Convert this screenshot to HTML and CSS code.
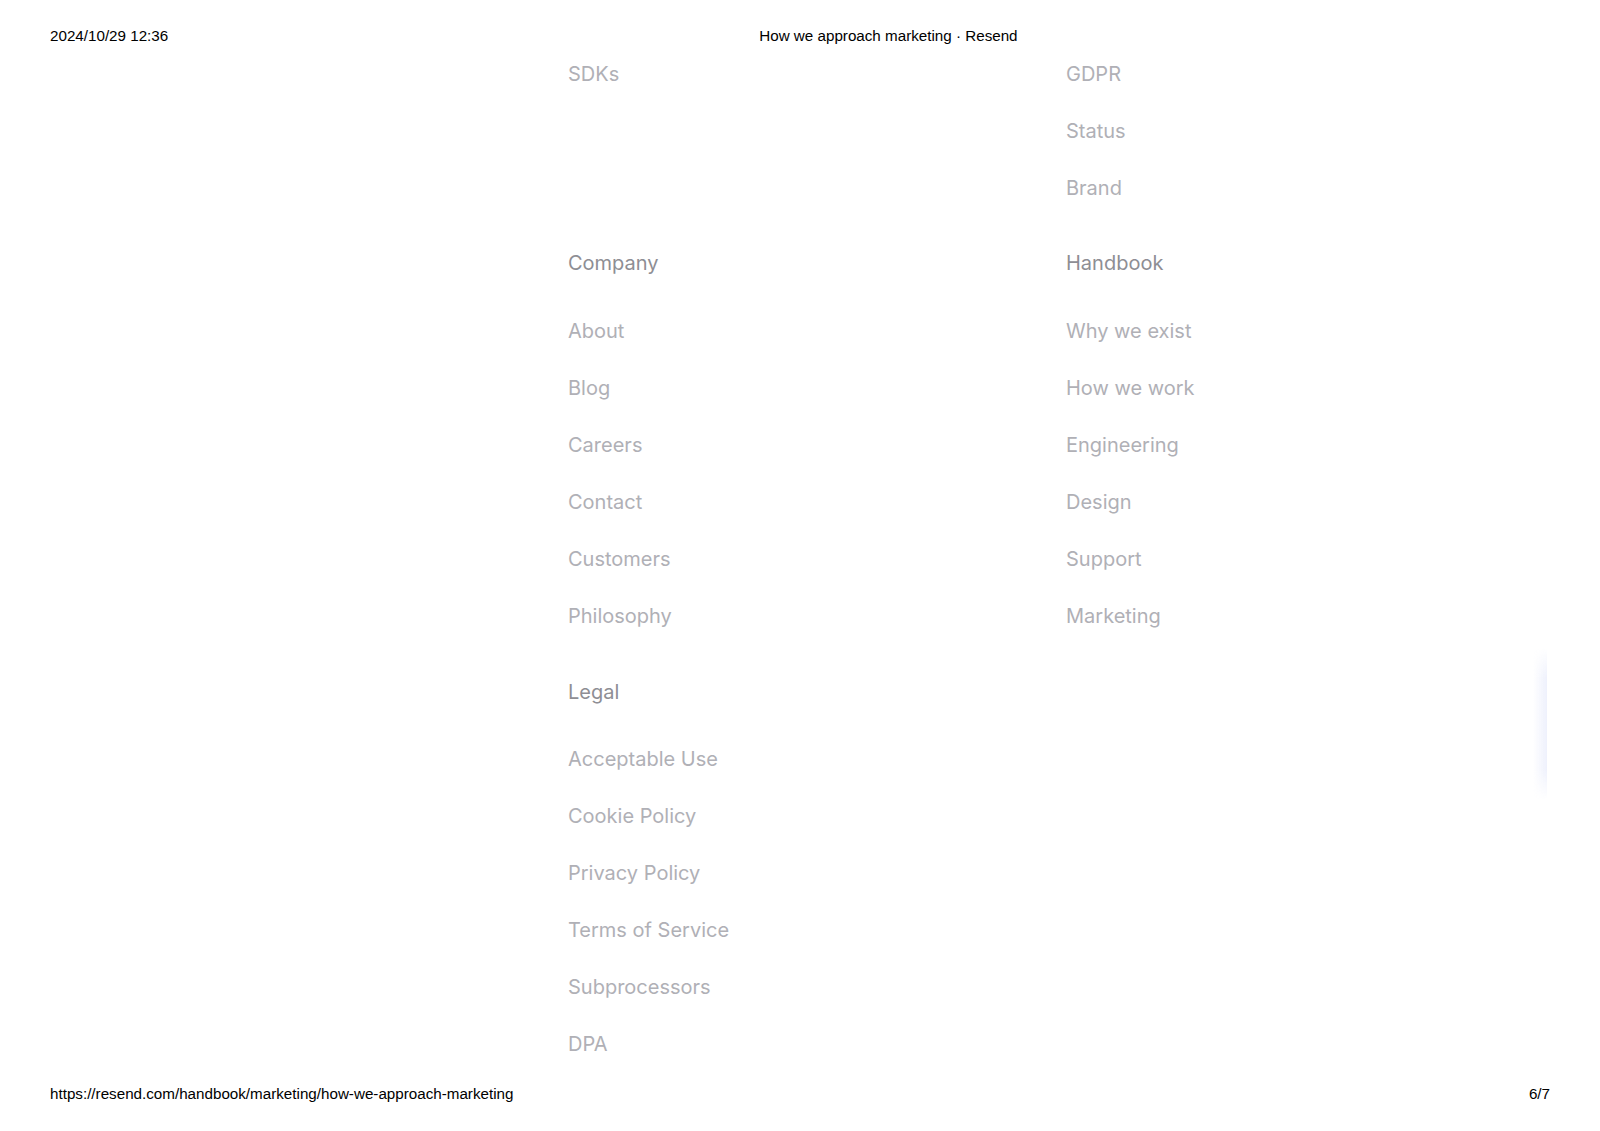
FILE: index.html
```html
<!DOCTYPE html>
<html lang="en">
<head>
<meta charset="utf-8">
<title>How we approach marketing · Resend</title>
<link rel="stylesheet" href="styles.css">
</head>
<body>
  <header class="print-header">
    <span class="print-date">2024/10/29 12:36</span>
    <span class="print-title">How we approach marketing · Resend</span>
  </header>

  <main class="footer-nav">
    <section class="nav-group">
      <ul class="nav-list">
        <li><a href="#">SDKs</a></li>
      </ul>
    </section>
    <section class="nav-group">
      <ul class="nav-list">
        <li><a href="#">GDPR</a></li>
        <li><a href="#">Status</a></li>
        <li><a href="#">Brand</a></li>
      </ul>
    </section>

    <section class="nav-group">
      <h3 class="nav-heading">Company</h3>
      <ul class="nav-list">
        <li><a href="#">About</a></li>
        <li><a href="#">Blog</a></li>
        <li><a href="#">Careers</a></li>
        <li><a href="#">Contact</a></li>
        <li><a href="#">Customers</a></li>
        <li><a href="#">Philosophy</a></li>
      </ul>
    </section>
    <section class="nav-group">
      <h3 class="nav-heading">Handbook</h3>
      <ul class="nav-list">
        <li><a href="#">Why we exist</a></li>
        <li><a href="#">How we work</a></li>
        <li><a href="#">Engineering</a></li>
        <li><a href="#">Design</a></li>
        <li><a href="#">Support</a></li>
        <li><a href="#">Marketing</a></li>
      </ul>
    </section>

    <section class="nav-group">
      <h3 class="nav-heading">Legal</h3>
      <ul class="nav-list">
        <li><a href="#">Acceptable Use</a></li>
        <li><a href="#">Cookie Policy</a></li>
        <li><a href="#">Privacy Policy</a></li>
        <li><a href="#">Terms of Service</a></li>
        <li><a href="#">Subprocessors</a></li>
        <li><a href="#">DPA</a></li>
      </ul>
    </section>
  </main>

  <div class="edge-glow" aria-hidden="true"></div>

  <footer class="print-footer">
    <span class="print-url">https://resend.com/handbook/marketing/how-we-approach-marketing</span>
    <span class="print-page">6/7</span>
  </footer>
</body>
</html>
```

FILE: styles.css
```css
html, body {
  margin: 0;
  padding: 0;
  background: #ffffff;
}

body {
  position: relative;
  width: 1600px;
  height: 1131px;
  overflow: hidden;
  display: flex;
  flex-direction: column;
  font-family: "Liberation Sans", Arial, sans-serif;
}

.print-header {
  display: flex;
  align-items: baseline;
  gap: 591px;
  padding: 26.6px 50px 0 50px;
  font-size: 15.2px;
  line-height: 17px;
  color: #000;
}

.print-footer {
  margin-top: auto;
  display: flex;
  justify-content: space-between;
  padding: 0 50px 29px 50px;
  font-size: 15.2px;
  line-height: 17px;
  color: #000;
}

.footer-nav {
  flex: none;
  margin: 18.1px 0 0 568px;
  display: grid;
  grid-template-columns: 498px 1fr;
  row-gap: 51.5px;
  font-family: Inter, "Noto Sans", sans-serif;
  font-size: 20px;
  line-height: 24px;
}

.nav-group {
  display: flex;
  flex-direction: column;
}

.nav-heading {
  margin: 0 0 43.3px 0;
  font-size: 20px;
  line-height: 24px;
  font-weight: 400;
  color: #8e8e94;
}

.nav-list {
  list-style: none;
  margin: 0;
  padding: 0;
  display: flex;
  flex-direction: column;
  gap: 33.1px;
}

.nav-list a {
  color: #b0b0b6;
  text-decoration: none;
}

.edge-glow {
  position: absolute;
  left: 1533px;
  top: 648px;
  width: 14px;
  height: 152px;
  background: linear-gradient(to right, rgba(236, 239, 252, 0) 0%, rgba(236, 239, 252, 0.9) 100%);
  -webkit-mask-image: linear-gradient(to bottom, transparent 0%, #000 20%, #000 80%, transparent 100%);
  mask-image: linear-gradient(to bottom, transparent 0%, #000 20%, #000 80%, transparent 100%);
}
```
